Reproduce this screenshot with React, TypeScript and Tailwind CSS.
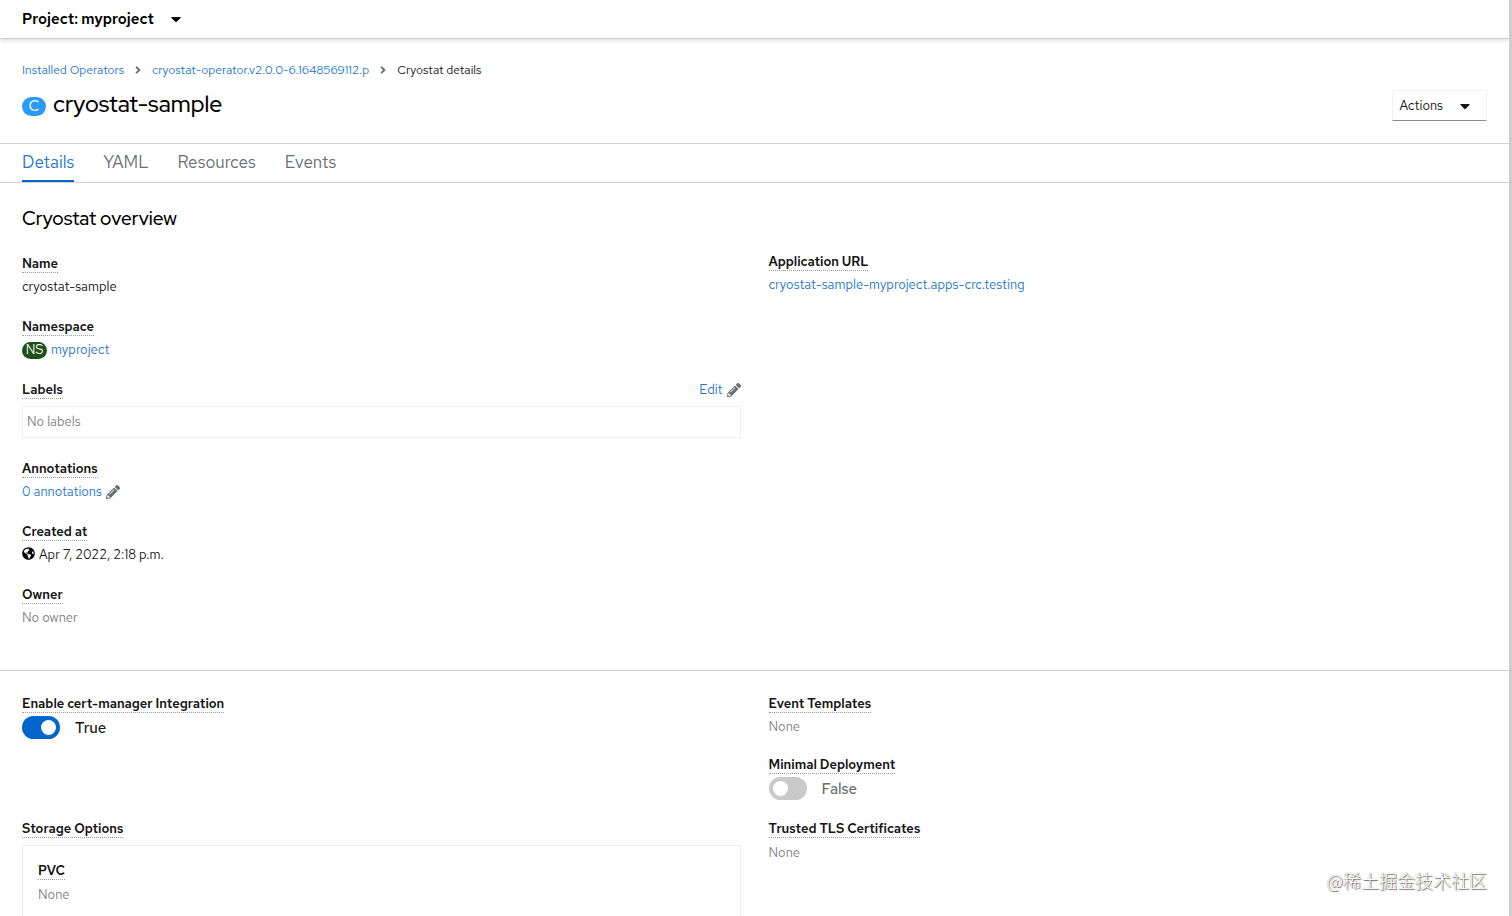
import type { ReactNode } from "react";
import { FaAngleRight, FaCaretDown, FaGlobeAmericas, FaPencilAlt } from "react-icons/fa";

const link = "text-[#2577cc] hover:underline";

function Term({ children }: { children: ReactNode }) {
  return (
    <dt className="flex h-6 items-center">
      <span className="border-b border-dotted border-[#9a9da0] text-[13px] leading-4 font-semibold text-[#151515]">
        {children}
      </span>
    </dt>
  );
}

function Field({ label, children }: { label: string; children: ReactNode }) {
  return (
    <div>
      <Term>{label}</Term>
      <dd className="flex h-[22px] items-center text-[13px]">{children}</dd>
    </div>
  );
}

function Toggle({ id, label, on }: { id: string; label: string; on: boolean }) {
  return (
    <div>
      <Term>{label}</Term>
      <dd className="flex items-center gap-[15px]">
        <input
          id={id}
          type="checkbox"
          role="switch"
          defaultChecked={on}
          className="h-[23px] w-[38px] appearance-none rounded-full bg-[#c9c9c9] p-1 before:block before:size-[15px] before:rounded-full before:bg-white checked:bg-[#0066cc] checked:pl-[19px]"
        />
        <label
          htmlFor={id}
          className={on ? "pt-px text-[15px] font-medium text-[#151515]" : "pt-px text-[15px] font-medium text-[#6a6e73]"}
        >
          {on ? "True" : "False"}
        </label>
      </dd>
    </div>
  );
}

const muted = "text-[#7d7f82]";

export default function App() {
  return (
    <div className="relative h-screen overflow-hidden border-r-[3px] border-[#cdcdcd] bg-white font-['Red_Hat_Text',Inter,sans-serif] text-[#151515]">
      <div className="flex h-[39px] items-center border-b border-[#cfcfcf] px-[22px] shadow-[0_2px_4px_rgba(0,0,0,0.12)]">
        <button type="button" className="flex items-center gap-[14px] text-[15px] font-semibold text-black">
          Project: myproject
          <FaCaretDown className="size-4" />
        </button>
      </div>

      <header className="h-[104px] px-[22px] pt-[21px]">
        <nav aria-label="Breadcrumb" className="flex h-5 items-center gap-2 text-xs">
          <a href="#operators" className={link}>Installed Operators</a>
          <FaAngleRight className="size-3 text-[#6a6e73]" />
          <a href="#operator" className={link}>cryostat-operator.v2.0.0-6.1648569112.p</a>
          <FaAngleRight className="size-3 text-[#6a6e73]" />
          <span>Cryostat details</span>
        </nav>
        <div className="mt-[7px] flex h-[34px] items-end justify-between">
          <h1 className="flex items-center gap-[7px] pb-px font-['Red_Hat_Display','Red_Hat_Text',Inter,sans-serif] text-[23px] leading-8 font-medium text-black">
            <span className="mt-1 flex h-[19px] w-6 items-center justify-center rounded-full bg-[#2b9af3] font-['Red_Hat_Text',Inter,sans-serif] text-[15px] font-normal text-white">
              C
            </span>
            cryostat-sample
          </h1>
          <button
            type="button"
            className="flex h-[31px] items-center gap-[14px] border border-[#f2f2f2] border-b-[#8a8d90] px-[7px] pr-[13px] text-[13px]"
          >
            Actions
            <FaCaretDown className="size-4" />
          </button>
        </div>
      </header>

      <nav aria-label="Details sections" className="flex h-10 gap-[29px] border-y border-[#d2d2d2] px-[22px] text-[17px] text-[#6a6e73]">
        <a href="#details" aria-current="page" className="border-b-2 border-[#0066cc] leading-[37px] text-[#2577cc]">Details</a>
        <a href="#yaml" className="leading-[37px]">YAML</a>
        <a href="#resources" className="leading-[37px]">Resources</a>
        <a href="#events" className="leading-[37px]">Events</a>
      </nav>

      <main>
        <section className="h-[488px] border-b border-[#d2d2d2] px-[22px] pt-[22px]">
          <h2 className="font-['Red_Hat_Display','Red_Hat_Text',Inter,sans-serif] text-[19px] leading-7 font-medium text-black">Cryostat overview</h2>
          <div className="mt-[17px] grid grid-cols-2 gap-7">
            <dl className="flex flex-col gap-[17px] pt-[2px]">
              <Field label="Name">cryostat-sample</Field>
              <Field label="Namespace">
                <span className="mr-1 flex h-[17px] w-[25px] items-center justify-center rounded-full bg-[#1e4f18] text-[13px] text-white">
                  NS
                </span>
                <a href="#myproject" className={link}>myproject</a>
              </Field>
              <div>
                <div className="flex items-center justify-between">
                  <Term>Labels</Term>
                  <button type="button" className="flex items-center gap-1 text-[13px] text-[#2577cc]">
                    Edit <FaPencilAlt className="size-[14px] text-[#6a6e73]" />
                  </button>
                </div>
                <dd className="mt-1 mb-0.5 flex h-8 items-center border border-[#f0f0f0] px-1 text-[13px] text-[#7d7f82]">
                  No labels
                </dd>
              </div>
              <Field label="Annotations">
                <button type="button" className="flex items-center gap-1 text-[#2577cc]">
                  0 annotations <FaPencilAlt className="size-[14px] text-[#6a6e73]" />
                </button>
              </Field>
              <Field label="Created at">
                <FaGlobeAmericas className="mr-1 mb-[3px] size-[13px] text-black" />
                Apr 7, 2022, 2:18 p.m.
              </Field>
              <Field label="Owner">
                <span className={muted}>No owner</span>
              </Field>
            </dl>
            <dl>
              <Field label="Application URL">
                <a href="#application" className={link}>cryostat-sample-myproject.apps-crc.testing</a>
              </Field>
            </dl>
          </div>
        </section>

        <section className="px-[22px] pt-[21px]">
          <div className="grid grid-cols-2 gap-x-7 gap-y-[17px]">
            <dl>
              <Toggle id="cert-manager" label="Enable cert-manager Integration" on />
            </dl>
            <dl className="flex flex-col gap-[15px]">
              <Field label="Event Templates">
                <span className={muted}>None</span>
              </Field>
              <Toggle id="minimal" label="Minimal Deployment" on={false} />
            </dl>
            <dl>
              <Term>Storage Options</Term>
              <dd className="mt-[3px] border border-[#ededed] px-[15px] pt-[14px] pb-16">
                <dl>
                  <Field label="PVC">
                    <span className={muted}>None</span>
                  </Field>
                </dl>
              </dd>
            </dl>
            <dl>
              <Field label="Trusted TLS Certificates">
                <span className={muted}>None</span>
              </Field>
            </dl>
          </div>
        </section>
      </main>

      <div className="absolute right-[22px] bottom-[22px] font-['Noto_Sans_CJK_SC',sans-serif] text-lg leading-7 font-light text-white [text-shadow:1px_1px_1px_#666,0_0_1px_#888]">
        @稀土掘金技术社区
      </div>
    </div>
  );
}
